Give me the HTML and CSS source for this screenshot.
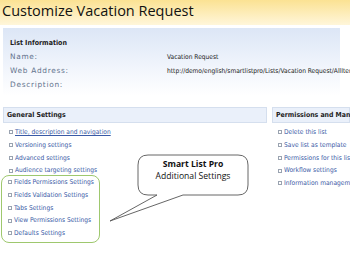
FILE: index.html
```html
<!DOCTYPE html>
<html lang="en">
<head>
  <meta charset="UTF-8">
  <title>Customize Vacation Request</title>
  <link rel="stylesheet" href="styles.css">
</head>
<body>

  <div class="title">Customize Vacation Request</div>

  <div class="info">
    <div class="info-head">List Information</div>
    <div class="info-row"><span class="label">Name:</span><span class="value">Vacation Request</span></div>
    <div class="info-row"><span class="label">Web Address:</span><span class="value">http://demo/english/smartlistpro/Lists/Vacation Request/AllItems.aspx</span></div>
    <div class="info-row"><span class="label">Description:</span><span class="value"></span></div>
  </div>

  <div class="settings">
    <div class="col general">
      <div class="col-head">General Settings</div>
      <ul class="links">
        <li><a class="first" href="#">Title, description and navigation</a></li>
        <li><a href="#">Versioning settings</a></li>
        <li><a href="#">Advanced settings</a></li>
        <li><a href="#">Audience targeting settings</a></li>
      </ul>
      <ul class="links extra">
        <li><a href="#">Fields Permissions Settings</a></li>
        <li><a href="#">Fields Validation Settings</a></li>
        <li><a href="#">Tabs Settings</a></li>
        <li><a href="#">View Permissions Settings</a></li>
        <li><a href="#">Defaults Settings</a></li>
      </ul>
    </div>
    <div class="col perms">
      <div class="col-head">Permissions and Management</div>
      <ul class="links">
        <li><a href="#">Delete this list</a></li>
        <li><a href="#">Save list as template</a></li>
        <li><a href="#">Permissions for this list</a></li>
        <li><a href="#">Workflow settings</a></li>
        <li><a href="#">Information management policy settings</a></li>
      </ul>
    </div>
  </div>

  <!-- callout over the list -->
  <div class="callout">
    <svg class="callout-shape" width="142" height="70" viewBox="0 0 142 70">
      <path d="M40 2 H130 Q140 2 140 12 V32 Q140 42 130 42 H75 L2 68 L49 42 H40 Q30 42 30 32 V12 Q30 2 40 2 Z"
            fill="#fff" stroke="#555" stroke-width="0.9"/>
    </svg>
    <div class="callout-text">
      <b>Smart List Pro</b>
      <span>Additional Settings</span>
    </div>
  </div>

</body>
</html>
```

FILE: styles.css
```css
body {
  margin: 0;
  font-family: "DejaVu Sans Condensed", "DejaVu Sans", sans-serif;
  font-size: 6.6px;
  background-color: #fff;
  width: 350px;
  height: 267px;
  overflow: hidden;
  position: relative;
}
.title {
  height: 25px;
  padding-left: 2px;
  font-family: "Open Sans", sans-serif;
  font-size: 14.5px;
  line-height: 22px;
  color: #111;
  background: linear-gradient(#fbe293, #fff6da);
}
.info {
  margin: 3px 10px 0 3px;
  padding: 8px 0 0 7px;
  height: 60px;
  background: linear-gradient(#dce6f6, #f5f8fd 70%, #fff);
  white-space: nowrap;
}
.info-head {
  font-weight: bold;
  font-size: 7px;
  color: #222;
  height: 14px;
  line-height: 14px;
}
.info-row {
  display: flex;
  height: 14px;
  line-height: 14px;
}
.label {
  width: 157px;
  flex: none;
  font-family: "DejaVu Sans", sans-serif;
  font-size: 7.4px;
  letter-spacing: 0.7px;
  color: #62728c;
}
.value {
  color: #222;
}
.settings {
  display: flex;
  margin-top: 11px;
  white-space: nowrap;
}
.col-head {
  height: 14px;
  line-height: 14px;
  padding-left: 3px;
  font-weight: bold;
  font-size: 6.9px;
  color: #222;
  background-color: #eaf0fa;
  border: 1px solid #d5dfee;
}
.general {
  width: 264px;
  margin-left: 3px;
}
.perms {
  flex: 1;
  margin-left: 5px;
  overflow: hidden;
}
.links {
  list-style: none;
  margin: 0;
  padding: 3px 0 0 6px;
}
.links li {
  height: 12.75px;
  line-height: 12.75px;
  display: flex;
  align-items: center;
}
.links li::before {
  content: "";
  width: 2px;
  height: 2px;
  border: 1px solid #9aa3b0;
  margin-right: 2px;
  flex: none;
}
.links a {
  color: #3a5aa6;
  text-decoration: none;
}
.links a.first {
  text-decoration: underline;
}
.links.extra {
  width: 91px;
  margin: -2px 0 0 -2px;
  padding: 0 0 2px 6px;
  border: 1.5px solid #9ec86e;
  border-radius: 8px;
}
.callout {
  position: absolute;
  left: 108px;
  top: 153px;
  width: 142px;
  height: 70px;
}
.callout-shape {
  position: absolute;
  left: 0;
  top: 0;
}
.callout-text {
  position: absolute;
  left: 30px;
  top: 5px;
  width: 110px;
  display: flex;
  flex-direction: column;
  align-items: center;
  font-family: "Open Sans", sans-serif;
  font-size: 8.6px;
  line-height: 12px;
  color: #111;
}
```
